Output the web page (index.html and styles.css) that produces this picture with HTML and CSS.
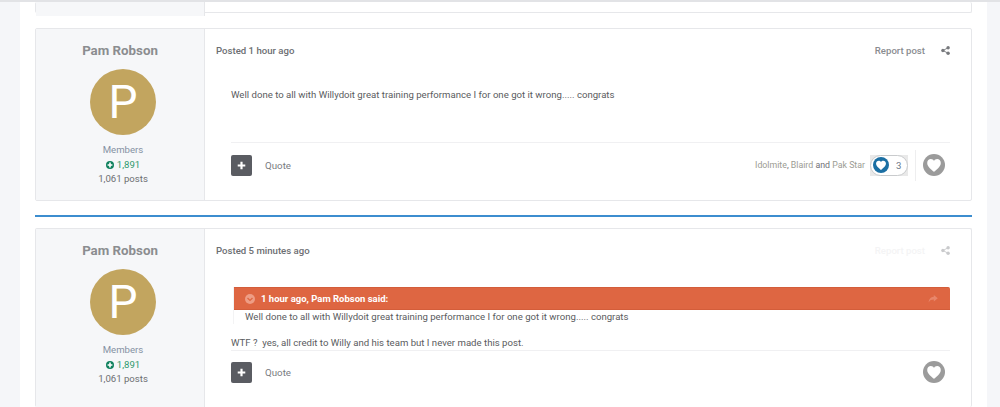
FILE: index.html
```html
<!DOCTYPE html>
<html lang="en">
<head>
    <meta charset="UTF-8">
    <title>Pam Robson posts</title>
    <link rel="stylesheet" href="styles.css">
</head>
<body>
    <div class="page">
        <!-- Tail of the previous post -->
        <div class="post post-stub">
            <div class="author"></div>
            <div class="body"></div>
        </div>

        <!-- First post -->
        <div class="post post-first">
            <div class="author">
                <h3 class="name">Pam Robson</h3>
                <div class="avatar">P</div>
                <div class="group">Members</div>
                <div class="rep">
                    <svg class="rep-icon" viewBox="0 0 12 12"><circle cx="6" cy="6" r="6"/><path class="plus" d="M4.800 2.400h2.400v2.400h2.400v2.400H7.200v2.400H4.800V7.200H2.400V4.800h2.400z"/></svg>
                    1,891
                </div>
                <div class="count">1,061 posts</div>
            </div>
            <div class="body">
                <div class="meta">
                    <span class="posted">Posted 1 hour ago</span>
                    <span class="tools">
                        <a class="report">Report post</a>
                        <svg class="share" viewBox="0 0 10 10"><path class="share-line" d="M7.800 2 2.200 5l5.600 3"/><circle cx="7.900" cy="2" r="1.900"/><circle cx="2.100" cy="5" r="1.900"/><circle cx="7.900" cy="8" r="1.900"/></svg>
                    </span>
                </div>
                <div class="content content-first">
                    <p>Well done to all with Willydoit great training performance I for one got it wrong..... congrats</p>
                </div>
                <div class="controls">
                    <span class="multi">
                        <svg viewBox="0 0 10 10"><path d="M3.800 .8h2.400v3h3v2.400h-3v3H3.800v-3h-3V3.800h3z"/></svg>
                    </span>
                    <a class="quote">Quote</a>
                    <div class="likes">
                        <span class="likers"><a>Idolmite</a>, <a>Blaird</a> and <a>Pak Star</a></span>
                        <span class="badge-wrap">
                            <span class="badge">
                                <svg class="heart-round blue" viewBox="0 0 22 22"><circle cx="11" cy="11" r="11"/><path class="heart" d="M11 17.800C9 16 4.200 12.800 4.200 8.900 4.200 6.700 5.900 5.100 7.900 5.100c1.300 0 2.500.7 3.100 1.900.6-1.200 1.800-1.900 3.100-1.900 2 0 3.700 1.600 3.700 3.800 0 3.900-4.800 7.100-6.800 8.900z"/></svg>
                                <span class="badge-num">3</span>
                            </span>
                        </span>
                        <span class="like-btn">
                            <svg class="heart-round" viewBox="0 0 22 22"><circle cx="11" cy="11" r="11"/><path class="heart" d="M11 17.800C9 16 4.200 12.800 4.200 8.900 4.200 6.700 5.900 5.100 7.900 5.100c1.300 0 2.500.7 3.100 1.900.6-1.200 1.800-1.900 3.100-1.900 2 0 3.700 1.600 3.700 3.800 0 3.900-4.800 7.100-6.800 8.900z"/></svg>
                        </span>
                    </div>
                </div>
            </div>
        </div>

        <hr class="divider">

        <!-- Second post -->
        <div class="post post-second">
            <div class="author">
                <h3 class="name">Pam Robson</h3>
                <div class="avatar">P</div>
                <div class="group">Members</div>
                <div class="rep">
                    <svg class="rep-icon" viewBox="0 0 12 12"><circle cx="6" cy="6" r="6"/><path class="plus" d="M4.800 2.400h2.400v2.400h2.400v2.400H7.200v2.400H4.800V7.200H2.400V4.800h2.400z"/></svg>
                    1,891
                </div>
                <div class="count">1,061 posts</div>
            </div>
            <div class="body">
                <div class="meta">
                    <span class="posted">Posted 5 minutes ago</span>
                    <span class="tools tools-faded">
                        <a class="report">Report post</a>
                        <svg class="share" viewBox="0 0 10 10"><path class="share-line" d="M7.800 2 2.200 5l5.600 3"/><circle cx="7.900" cy="2" r="1.900"/><circle cx="2.100" cy="5" r="1.900"/><circle cx="7.900" cy="8" r="1.900"/></svg>
                    </span>
                </div>
                <div class="content content-second">
                    <div class="quote-box">
                        <div class="quote-head">
                            <svg class="quote-toggle" viewBox="0 0 12 12"><circle cx="6" cy="6" r="6"/><path d="M3 4.700l3 3 3-3" fill="none" stroke="#de6642" stroke-width="1.600"/></svg>
                            <span>1 hour ago, Pam Robson said:</span>
                            <svg class="quote-jump" viewBox="0 0 12 10"><path d="M7 0l5 4-5 4V5.700C4 5.700 2 6.500.6 9.500.8 5.500 3 2.500 7 2.300z"/></svg>
                        </div>
                        <p class="quote-text">Well done to all with Willydoit great training performance I for one got it wrong..... congrats</p>
                    </div>
                    <p class="reply">WTF ?&nbsp; yes, all credit to Willy and his team but I never made this post.</p>
                </div>
                <div class="controls controls-second">
                    <span class="multi">
                        <svg viewBox="0 0 10 10"><path d="M3.800 .8h2.400v3h3v2.400h-3v3H3.800v-3h-3V3.800h3z"/></svg>
                    </span>
                    <a class="quote">Quote</a>
                    <div class="likes">
                        <span class="like-btn like-plain">
                            <svg class="heart-round" viewBox="0 0 22 22"><circle cx="11" cy="11" r="11"/><path class="heart" d="M11 17.800C9 16 4.200 12.800 4.200 8.900 4.200 6.700 5.900 5.100 7.900 5.100c1.300 0 2.500.7 3.100 1.900.6-1.200 1.800-1.900 3.100-1.900 2 0 3.700 1.600 3.700 3.800 0 3.900-4.800 7.100-6.800 8.900z"/></svg>
                        </span>
                    </div>
                </div>
            </div>
        </div>
    </div>
</body>
</html>
```

FILE: styles.css
```css
* {
    box-sizing: border-box;
    margin: 0;
    padding: 0;
}

html, body {
    height: 407px;
    overflow: hidden;
}

body {
    background: #f5f6f9;
    border-top: 2px solid #e2e3e6;
    font-family: Roboto, 'Liberation Sans', sans-serif;
    font-size: 9.6px;
    color: #5a5c60;
}

.page {
    background: white;
    margin: 0 13px 0 20px;
    padding: 0 15px;
    height: 405px;
}

/* Post card */
.post {
    display: flex;
    background: white;
    border: 1px solid #e6e7ea;
    border-radius: 2px;
}

.post-stub {
    height: 11px;
    border-top: none;
    margin-bottom: 15px;
}

.post-first {
    height: 173px;
}

.post-second {
    height: 179px;
    border-bottom: none;
}

.author {
    width: 169px;
    flex: none;
    background: #f6f7f9;
    border-right: 1px solid #e6e7ea;
    display: flex;
    flex-direction: column;
    align-items: center;
    padding-top: 14px;
    padding-left: 6px;
    line-height: 14.5px;
    color: #6d6f73;
}

.name {
    font-size: 13.3px;
    line-height: 16px;
    font-weight: 700;
    color: #8b8d90;
    margin-left: -6px;
}

.avatar {
    width: 66px;
    height: 66px;
    border-radius: 50%;
    background: #c2a55f;
    color: white;
    font-size: 46px;
    line-height: 66px;
    text-align: center;
    margin-top: 10px;
    margin-bottom: 8px;
}

.group {
    color: #8591a3;
}

.rep {
    color: #2f9a6e;
    display: flex;
    align-items: center;
    gap: 3px;
}

.rep-icon {
    width: 8px;
    height: 8px;
    fill: #11825f;
}

.rep-icon .plus {
    fill: white;
}

.body {
    flex: 1;
    min-width: 0;
    padding: 0 21px 0 11px;
}

/* Post header */
.meta {
    display: flex;
    justify-content: space-between;
    align-items: center;
    height: 14px;
    margin-top: 14px;
    font-weight: 500;
    color: #6c6e72;
}

.tools {
    display: flex;
    align-items: center;
    gap: 16px;
    color: #8a8c90;
}

.tools-faded {
    color: #f4f4f5;
}

.tools-faded .share {
    fill: #c9cacc;
    stroke: #c9cacc;
}

.share {
    width: 9px;
    height: 9px;
    fill: #77797d;
    stroke: #77797d;
    stroke-width: 0;
}

.share-line {
    fill: none;
    stroke-width: 1;
}

/* Post content */
.content {
    margin-left: 15px;
    border-bottom: 1px solid #f0f0f2;
}

.content-first {
    height: 86px;
    padding-top: 31px;
    line-height: 14px;
}

.content-second {
    padding-top: 30px;
}

.quote-box {
    margin-left: 2px;
    border-left: 1px solid #f3f3f4;
}

.quote-head {
    display: flex;
    align-items: center;
    height: 23px;
    padding: 0 12px 0 11px;
    background: #de6642;
    border-top: 1px solid #d35d3a;
    border-bottom: 1px solid #d35d3a;
    border-radius: 0 2px 0 0;
    color: white;
    font-size: 9.5px;
    font-weight: 700;
}

.quote-toggle {
    width: 10px;
    height: 10px;
    fill: #ee9d85;
    margin-right: 6px;
}

.quote-jump {
    width: 10px;
    height: 8px;
    fill: #e8866a;
    margin-left: auto;
}

.quote-text {
    line-height: 14px;
    padding: 0 11px;
}

.reply {
    line-height: 14px;
    margin-top: 12px;
}

/* Controls row */
.controls {
    display: flex;
    align-items: center;
    margin-left: 15px;
    height: 44px;
}

.controls-second {
    height: 42px;
}

.multi {
    width: 21px;
    height: 21px;
    background: #5a5c62;
    border-radius: 2px;
    display: flex;
    align-items: center;
    justify-content: center;
}

.multi svg {
    width: 9px;
    height: 9px;
    fill: white;
}

.quote {
    margin-left: 13px;
    font-size: 9.75px;
    color: #797b7f;
}

.likes {
    margin-left: auto;
    display: flex;
    align-items: center;
}

.likers {
    font-size: 8.8px;
    color: #6e7075;
    margin-right: 5px;
}

.likers a {
    color: #9b9c93;
}

.badge-wrap {
    background: #e9e9e9;
    display: flex;
}

.badge {
    display: flex;
    align-items: center;
    width: 38px;
    height: 21px;
    background: white;
    border: 1px solid #c9cbcd;
    border-radius: 11px;
}

.heart-round {
    display: block;
    width: 22px;
    height: 22px;
    fill: #9b9b9b;
}

.heart-round .heart {
    fill: white;
}

.badge .heart-round {
    width: 16px;
    height: 16px;
    margin-left: 2px;
}

.heart-round.blue {
    fill: #1b6fa3;
}

.badge-num {
    margin-left: 7px;
    color: #6b7a8a;
}

.like-btn {
    display: flex;
    align-items: center;
    height: 31px;
    margin-left: 7px;
    padding-left: 7px;
    border-left: 1px solid #eeeeef;
    margin-right: 5px;
}

.like-plain {
    border-left: none;
}

.divider {
    border: none;
    height: 2px;
    background: #3c8dcf;
    margin: 14px 0 11px;
}
```
